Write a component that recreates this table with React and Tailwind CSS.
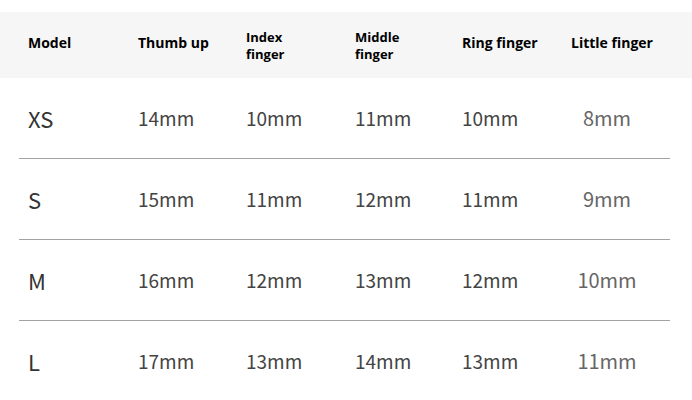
const headers = [
  { label: "Model" },
  { label: "Thumb up" },
  { label: "Index", second: "finger" },
  { label: "Middle", second: "finger" },
  { label: "Ring finger" },
  { label: "Little finger" },
];

const rows = [
  { model: "XS", values: ["14mm", "10mm", "11mm", "10mm"], little: "8mm" },
  { model: "S", values: ["15mm", "11mm", "12mm", "11mm"], little: "9mm" },
  { model: "M", values: ["16mm", "12mm", "13mm", "12mm"], little: "10mm" },
  { model: "L", values: ["17mm", "13mm", "14mm", "13mm"], little: "11mm" },
];

const cols = "grid grid-cols-[110px_108px_109px_107px_109px_80px]";

export default function App() {
  return (
    <div className="w-[692px] h-[400px] bg-white overflow-hidden" style={{ fontFamily: '"Noto Sans CJK SC", "Noto Sans", sans-serif' }}>
      {/* header band */}
      <div className="mt-[12px] h-[66px] bg-[#f6f6f6]">
        <div className={`${cols} pl-[28px] items-start`} style={{ fontFamily: '"Open Sans", sans-serif' }}>
          {headers.map((h) =>
            h.second ? (
              <div key={h.label} className="pt-[17px] text-[13px] leading-[17px] font-bold text-black">
                <div>{h.label}</div>
                <div>{h.second}</div>
              </div>
            ) : (
              <div key={h.label} className="pt-[22px] text-[14px] leading-[18px] font-bold text-black whitespace-nowrap">
                {h.label}
              </div>
            )
          )}
        </div>
      </div>

      {/* rows */}
      <div className="flex flex-col">
        {rows.map((r, i) => (
          <div key={r.model} className={i < rows.length - 1 ? "ml-[19px] w-[651px] border-b border-[#a3a3a3]" : "ml-[19px] w-[651px]"}>
            <div className={`${cols} pl-[9px] h-[80px] items-center`}>
              <div className="text-[22px] text-[#333]">{r.model}</div>
              {r.values.map((v, j) => (
                <div key={j} className="text-[19px] text-[#444]">{v}</div>
              ))}
              <div className="flex justify-center w-[72px] text-[20px] text-[#666]">{r.little}</div>
            </div>
          </div>
        ))}
      </div>
    </div>
  );
}
